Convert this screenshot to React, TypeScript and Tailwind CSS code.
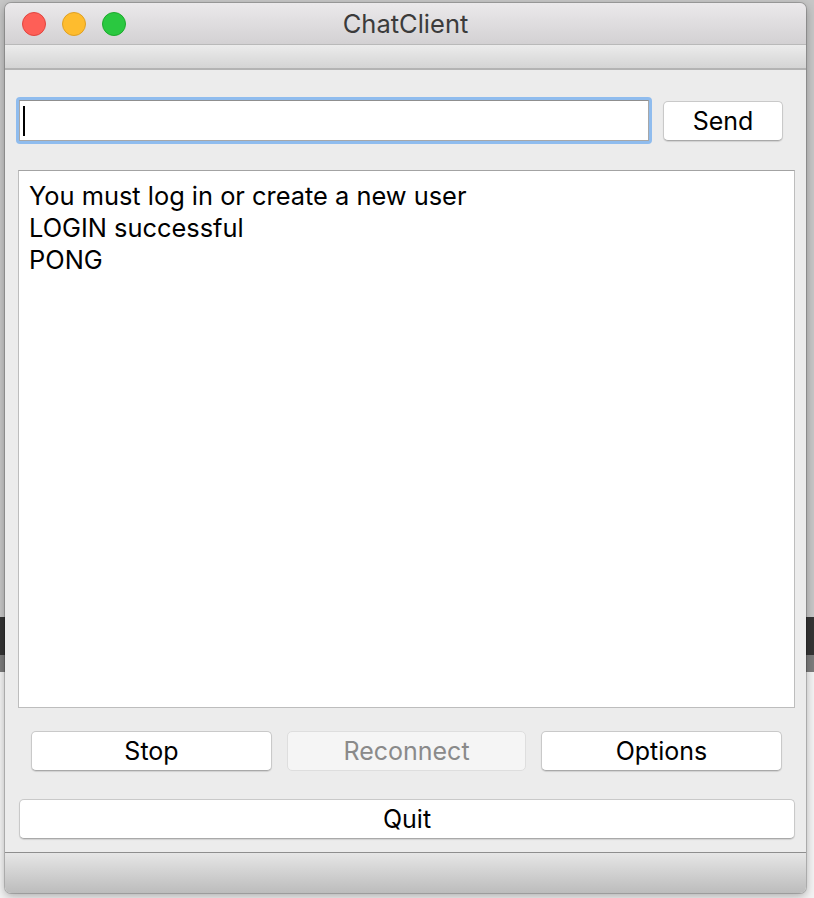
const lines = ["You must log in or create a new user", "LOGIN successful", "PONG"];

function MacButton({ label, disabled, className }: { label: string; disabled?: boolean; className: string }) {
  return (
    <button
      disabled={disabled}
      className={
        "h-[40px] shrink-0 rounded-[5px] border pt-[1px] text-[25px] leading-none " +
        (disabled
          ? "border-[#dedede] bg-[#f5f5f5] text-[#8a8a8a] "
          : "border-[#c9c9c9] border-b-[#a9a9a9] bg-white text-black shadow-[0_1px_1px_rgba(0,0,0,0.12)] ") +
        className
      }
    >
      {label}
    </button>
  );
}

export default function App() {
  return (
    <div
      className="h-[898px] w-[814px] overflow-hidden bg-[linear-gradient(to_bottom,#c6c6c6_0px,#c6c6c6_617px,#343434_617px,#343434_655px,#7c7c7c_655px,#7c7c7c_672px,#f3f3f3_672px)] pl-[5px] pt-[3px]"
      style={{ fontFamily: "Inter, 'Liberation Sans', sans-serif" }}
    >
      <div className="flex h-[890px] w-[801px] flex-col overflow-hidden rounded-[6px] shadow-[0_0_0_1px_rgba(0,0,0,0.18),0_3px_10px_rgba(0,0,0,0.3)]">
        {/* title bar */}
        <div className="relative flex h-[41px] shrink-0 items-center bg-[linear-gradient(to_bottom,#ebe9eb,#d3d1d3)] pl-[17px]">
          <div className="flex gap-[16px]">
            <span className="h-[24px] w-[24px] rounded-full border border-[#e1453f] bg-[#fe5f57]" />
            <span className="h-[24px] w-[24px] rounded-full border border-[#dfa023] bg-[#febc2e]" />
            <span className="h-[24px] w-[24px] rounded-full border border-[#1daa2c] bg-[#2ac840]" />
          </div>
          <div className="pointer-events-none absolute inset-0 flex items-center justify-center pt-[2px] text-[25.5px] text-[#3b3b3b]">
            ChatClient
          </div>
        </div>
        {/* toolbar */}
        <div className="h-[26px] shrink-0 border-t border-t-[#b9b9b9] border-b-[2px] border-b-[#b3b3b3] bg-[linear-gradient(to_bottom,#ececec,#d4d4d4)]" />

        {/* content */}
        <div className="flex flex-1 flex-col bg-[#ececec]">
          <div className="mt-[27px] flex items-center">
            <div className="ml-[11px] h-[47px] w-[636px] rounded-[4px] bg-[#8fbcee] p-[3px]">
              <div className="flex h-full items-center border border-[#a7a7a7] border-t-[#8f8f8f] bg-white pl-[3px]">
                <span className="h-[30px] w-[2px] bg-black" />
              </div>
            </div>
            <MacButton label="Send" className="ml-[11px] w-[120px]" />
          </div>

          <div className="ml-[13px] mt-[26px] h-[538px] w-[777px] border border-[#bdbdbd] border-t-[#a3a3a3] bg-white px-[10px] pt-[9px] text-[25.4px] leading-[32px] text-black">
            {lines.map((l) => (
              <div key={l}>{l}</div>
            ))}
          </div>

          <div className="mt-[23px] flex pl-[26px]">
            <MacButton label="Stop" className="w-[241px]" />
            <MacButton label="Reconnect" disabled className="ml-[15px] w-[239px]" />
            <MacButton label="Options" className="ml-[15px] w-[241px]" />
          </div>

          <div className="mt-[28px] flex pl-[14px]">
            <MacButton label="Quit" className="w-[776px]" />
          </div>
        </div>

        {/* bottom bar */}
        <div className="h-[41px] shrink-0 border-t border-t-[#8e8e8e] bg-[linear-gradient(to_bottom,#e6e6e6,#bcbcbc)]" />
      </div>
    </div>
  );
}
